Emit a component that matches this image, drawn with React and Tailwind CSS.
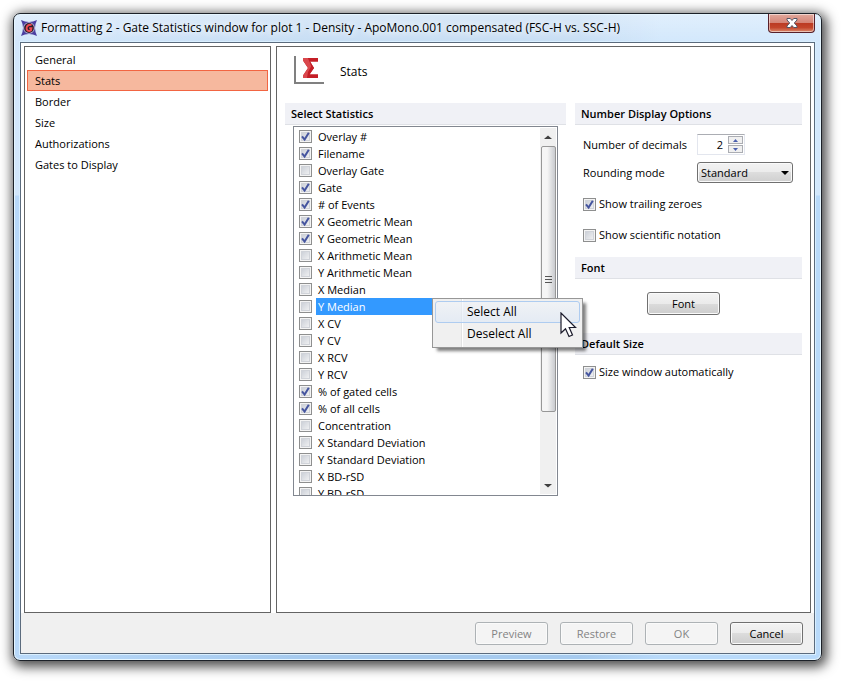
import { useState } from "react";

const NAV_ITEMS = ["General", "Stats", "Border", "Size", "Authorizations", "Gates to Display"];

const STATISTICS = [
  ["Overlay #", true],
  ["Filename", true],
  ["Overlay Gate", false],
  ["Gate", true],
  ["# of Events", true],
  ["X Geometric Mean", true],
  ["Y Geometric Mean", true],
  ["X Arithmetic Mean", false],
  ["Y Arithmetic Mean", false],
  ["X Median", false],
  ["Y Median", false],
  ["X CV", false],
  ["Y CV", false],
  ["X RCV", false],
  ["Y RCV", false],
  ["% of gated cells", true],
  ["% of all cells", true],
  ["Concentration", false],
  ["X Standard Deviation", false],
  ["Y Standard Deviation", false],
  ["X BD-rSD", false],
  ["Y BD-rSD", false],
];

function AppIcon() {
  return (
    <svg width="16" height="16" viewBox="0 0 16 16" className="shrink-0" aria-hidden="true">
      <path d="M0 0 Q8 4 16 0 Q12 8 16 16 Q8 12 0 16 Q4 8 0 0Z" fill="#4b3fa0" />
      <circle cx="8" cy="8" r="5.8" fill="#c3bfd8" />
      <circle cx="8" cy="8" r="4.9" fill="#2b1c2c" />
      <path d="M10.6 5.2 C8.4 4.2 5.8 5.4 5.6 8 C5.4 10.8 7.6 11.2 9 10.8 L10 10.4 L10.4 8.2 H8.2" fill="none" stroke="#ee4a50" strokeWidth="2" />
    </svg>
  );
}

function SigmaIcon() {
  return (
    <svg width="30" height="28" viewBox="0 0 30 28" className="shrink-0" aria-hidden="true">
      <path d="M1 0 V27 H30" fill="none" stroke="#808080" strokeWidth="2" />
      <path d="M9 2 H24 V5.5 H16 L20 12 L15.5 18.5 H24 V22 H9 V19.5 L14 12 L9 4.5Z" fill="#c41e26" />
      <path d="M9 2 H14 L18 9 L14 16 L13 22 H9 V19.5 L14 12 L9 4.5Z" fill="#da484d" />
      <path d="M14 2 H24 V5.5 H16 L20 12 L15.5 18.5 H24 V22 H13 L17 14 L17.5 11Z" fill="#c41e26" />
    </svg>
  );
}

function CheckBox({ id, defaultChecked }) {
  return (
    <span className="grid size-[13px] shrink-0">
      <input
        id={id}
        type="checkbox"
        defaultChecked={defaultChecked}
        className="peer col-start-1 row-start-1 size-[13px] appearance-none border border-[#8e8f8f] bg-linear-to-br from-[#c4c9d2] to-[#f8f8f8] shadow-[inset_0_0_0_1px_#f4f4f4,inset_0_0_0_2px_#d0d3d9]"
      />
      <svg
        viewBox="0 0 13 13"
        className="pointer-events-none invisible col-start-1 row-start-1 size-[13px] peer-checked:visible"
        aria-hidden="true"
      >
        <path d="M3 6.3 L5.6 9.6 L9.8 2.8" fill="none" stroke="#45559f" strokeWidth="2" />
      </svg>
    </span>
  );
}

function SectionHeader({ children }) {
  return (
    <h2 className="h-[22px] border-b border-[#dfe1e6] bg-[#f0f1f6] px-1.5 text-[11px] leading-[21px] font-semibold">
      {children}
    </h2>
  );
}

function PushButton({ children, disabled }) {
  return (
    <button
      type="button"
      disabled={disabled}
      className="h-[23px] w-[73px] rounded-[3px] border border-[#707070] bg-[linear-gradient(#f3f3f3,#ebebeb_50%,#dcdcdc_50%,#cdcdcd)] text-[11px] leading-5 shadow-[inset_0_0_0_1px_#fafafa] disabled:border-[#adb2b5] disabled:bg-[#f4f4f4] disabled:bg-none disabled:text-[#838383]"
    >
      {children}
    </button>
  );
}

function TitleBar() {
  return (
    <header className="flex h-7 items-start">
      <div className="flex h-7 min-w-0 flex-1 items-center gap-1 pl-px">
        <AppIcon />
        <h1 className="truncate text-[12px] leading-5 [text-shadow:0_0_8px_#fff,0_0_8px_#fff]">
          Formatting 2 - Gate Statistics window for plot 1 - Density - ApoMono.001 compensated (FSC-H vs. SSC-H)
        </h1>
      </div>
      <button
        type="button"
        aria-label="Close"
        className="flex h-[19px] w-[47px] shrink-0 items-center justify-center rounded-b-[4px] border border-t-0 border-[#57202a] bg-[linear-gradient(#e2a99d,#d58577_48%,#bb3a22_50%,#c3452b_75%,#dc8a6c)] shadow-[inset_0_0_0_1px_#ffffff80]"
      >
        <svg width="12" height="10" viewBox="0 0 12 10" aria-hidden="true">
          <path d="M1 .5 H4.3 L6 2.5 L7.7 .5 H11 V2 L8.3 5 L11 8 V9.5 H7.7 L6 7.5 L4.3 9.5 H1 V8 L3.7 5 L1 2Z" fill="#fff" stroke="#535666" />
        </svg>
      </button>
    </header>
  );
}

function Sidebar() {
  const [active, setActive] = useState("Stats");
  return (
    <nav className="w-[247px] shrink-0 border border-[#646464] bg-white p-0.5">
      {NAV_ITEMS.map((item) => (
        <button
          key={item}
          type="button"
          onClick={() => setActive(item)}
          className={
            item === active
              ? "block h-[21px] w-full border border-[#f26542] bg-[#f6b89e] px-[7px] text-left text-[11px] leading-[19px]"
              : "block h-[21px] w-full border border-transparent px-[7px] text-left text-[11px] leading-[19px]"
          }
        >
          {item}
        </button>
      ))}
    </nav>
  );
}

function ContextMenu() {
  return (
    <div
      role="menu"
      className="absolute top-0 left-[138px] z-10 w-[151px] border border-[#979797] bg-[linear-gradient(90deg,#f0f0f0_28px,#e2e3e3_28px,#e2e3e3_29px,#fff_29px,#fff_30px,#f0f0f0_30px)] p-0.5 text-black shadow-[4px_4px_3px_-1px_#00000080]"
    >
      <button
        type="button"
        role="menuitem"
        className="block h-[22px] w-full rounded-[3px] border border-[#aeccf0] bg-[linear-gradient(#f0f4fa80,#dde8f6a0)] pl-[31px] text-left text-[12px] leading-5"
      >
        Select All
      </button>
      <button
        type="button"
        role="menuitem"
        className="block h-[22px] w-full border border-transparent pl-[31px] text-left text-[12px] leading-5"
      >
        Deselect All
      </button>
      <svg width="18" height="26" viewBox="0 0 18 26" className="pointer-events-none absolute top-[13px] left-[127px]" aria-hidden="true">
        <path d="M1 1 V21 L5.5 16.8 L9 24.5 L12.5 23 L9.2 15.5 H15.5Z" fill="#fff" stroke="#1b1b2b" strokeWidth="1.2" />
      </svg>
    </div>
  );
}

function ScrollBar() {
  return (
    <div className="my-px mr-px flex w-4 shrink-0 flex-col items-center bg-[#f0f0f0]" aria-hidden="true">
      <svg width="16" height="18" viewBox="0 0 16 18">
        <path d="M4 11 L8 7.5 L12 11Z" fill="#404040" />
      </svg>
      <div className="flex h-[266px] w-[15px] flex-col items-center justify-center gap-0.5 rounded-[2px] border border-[#979797] bg-linear-to-r from-[#f5f5f5] from-40% to-[#c9cbcf]">
        <span className="h-px w-[7px] bg-[#555]" />
        <span className="h-px w-[7px] bg-[#555]" />
        <span className="h-px w-[7px] bg-[#555]" />
      </div>
      <svg width="16" height="18" viewBox="0 0 16 18" className="mt-auto">
        <path d="M4 8 L8 11.5 L12 8Z" fill="#404040" />
      </svg>
    </div>
  );
}

function StatisticsList() {
  return (
    <div className="mx-2 mt-px flex h-[370px] border border-[#828790] bg-white">
      <ul className="h-[368px] min-w-0 flex-1 pt-px [clip-path:inset(0_-60px_0_0)]">
        {STATISTICS.map(([name, checked], i) => {
          const selected = name === "Y Median";
          return (
            <li key={name} className="relative flex h-[17px] items-center gap-1 pl-[5px]">
              <CheckBox id={`stat-${i}`} defaultChecked={checked} />
              <label
                htmlFor={`stat-${i}`}
                className={
                  selected
                    ? "h-[17px] flex-1 bg-[#3399ff] pl-0.5 text-[11px] leading-[17px] text-white"
                    : "h-[17px] flex-1 pl-0.5 text-[11px] leading-[17px]"
                }
              >
                {name}
              </label>
              {selected && <ContextMenu />}
            </li>
          );
        })}
      </ul>
      <ScrollBar />
    </div>
  );
}

function NumberOptions() {
  return (
    <section>
      <SectionHeader>Number Display Options</SectionHeader>
      <div className="px-2 pt-[9px] text-[11px]">
        <div className="flex items-center">
          <label htmlFor="decimals" className="w-[114px] leading-5">
            Number of decimals
          </label>
          <div className="flex h-[21px] w-12 items-center border border-[#e3e6ee] border-t-[#abadb3] pr-px">
            <input id="decimals" type="text" defaultValue="2" className="h-[17px] w-0 min-w-0 flex-1 pr-[5px] text-right" />
            <div className="flex flex-col gap-px">
              <button type="button" aria-label="Increase" className="flex h-2 w-[15px] items-center justify-center border border-[#abadb3] bg-[#f0f0f0]">
                <svg width="5" height="3" viewBox="0 0 5 3" aria-hidden="true">
                  <path d="M0 3 L2.5 0 L5 3Z" fill="#4a5fae" />
                </svg>
              </button>
              <button type="button" aria-label="Decrease" className="flex h-2 w-[15px] items-center justify-center border border-[#abadb3] bg-[#f0f0f0]">
                <svg width="5" height="3" viewBox="0 0 5 3" aria-hidden="true">
                  <path d="M0 0 L2.5 3 L5 0Z" fill="#4a5fae" />
                </svg>
              </button>
            </div>
          </div>
        </div>
        <div className="mt-[7px] flex items-center">
          <label htmlFor="rounding" className="w-[114px] leading-5">
            Rounding mode
          </label>
          <div className="grid w-24">
            <select
              id="rounding"
              className="col-start-1 row-start-1 h-[21px] appearance-none rounded-[3px] border border-[#707070] bg-[linear-gradient(#f2f2f2,#ebebeb_50%,#dddddd_50%,#cfcfcf)] pl-[3px] leading-[19px] shadow-[inset_0_0_0_1px_#fafafa]"
            >
              <option>Standard</option>
            </select>
            <svg width="8" height="4" viewBox="0 0 8 4" className="pointer-events-none col-start-1 row-start-1 mr-1 self-center justify-self-end" aria-hidden="true">
              <path d="M0 0 H8 L4 4Z" fill="#000" />
            </svg>
          </div>
        </div>
        <div className="mt-[11px] flex h-5 items-center gap-[3px]">
          <CheckBox id="trailing" defaultChecked />
          <label htmlFor="trailing">Show trailing zeroes</label>
        </div>
        <div className="mt-[11px] flex h-5 items-center gap-[3px]">
          <CheckBox id="scientific" />
          <label htmlFor="scientific">Show scientific notation</label>
        </div>
      </div>
    </section>
  );
}

function StatsPanel() {
  return (
    <main className="min-w-0 flex-1 border border-[#646464] bg-white px-2 pt-[9px]">
      <div className="ml-[9px] flex h-[28px] items-center gap-4">
        <SigmaIcon />
        <span className="pt-1 text-[12px] leading-5">Stats</span>
      </div>
      <div className="mt-[19px] grid grid-cols-[281fr_227fr] gap-[9px]">
        <section>
          <SectionHeader>Select Statistics</SectionHeader>
          <StatisticsList />
        </section>
        <div>
          <NumberOptions />
          <section className="mt-3">
            <SectionHeader>Font</SectionHeader>
            <div className="flex justify-center pt-[13px] pr-2.5">
              <PushButton>Font</PushButton>
            </div>
          </section>
          <section className="mt-[18px]">
            <SectionHeader>Default Size</SectionHeader>
            <div className="mt-[7px] flex h-5 items-center gap-[3px] px-2 text-[11px]">
              <CheckBox id="autosize" defaultChecked />
              <label htmlFor="autosize">Size window automatically</label>
            </div>
          </section>
        </div>
      </div>
    </main>
  );
}

export default function App() {
  return (
    <div className="flex min-h-screen flex-col bg-white pt-[13px] pr-[22px] pb-[22px] pl-[13px] font-['Open_Sans','Noto_Sans',sans-serif] text-black">
      <div className="flex flex-1 flex-col rounded-[7px] border border-[#1c2128] bg-[linear-gradient(#ffffff50,#ffffff00_28px),linear-gradient(#ffffff60_181px,#ffffff00_182px),linear-gradient(90deg,#b9d9f9,#a6caee_35%,#a6caee_70%,#b9dafa_80%)] px-1.5 pb-1.5 shadow-[inset_0_0_0_1px_#e6f6ff,2px_3px_12px_3px_#000000b0]">
        <TitleBar />
        <div className="flex flex-1 flex-col border border-[#5b6b7d] bg-white shadow-[0_0_0_1px_#d9efff]">
          <div className="flex flex-1 gap-[5px] px-[3px] pt-[3px]">
            <Sidebar />
            <StatsPanel />
          </div>
          <footer className="flex h-10 justify-end gap-3 bg-[#f0f0f0] pt-[9px] pr-[11px]">
            <PushButton disabled>Preview</PushButton>
            <PushButton disabled>Restore</PushButton>
            <PushButton disabled>OK</PushButton>
            <PushButton>Cancel</PushButton>
          </footer>
        </div>
      </div>
    </div>
  );
}
